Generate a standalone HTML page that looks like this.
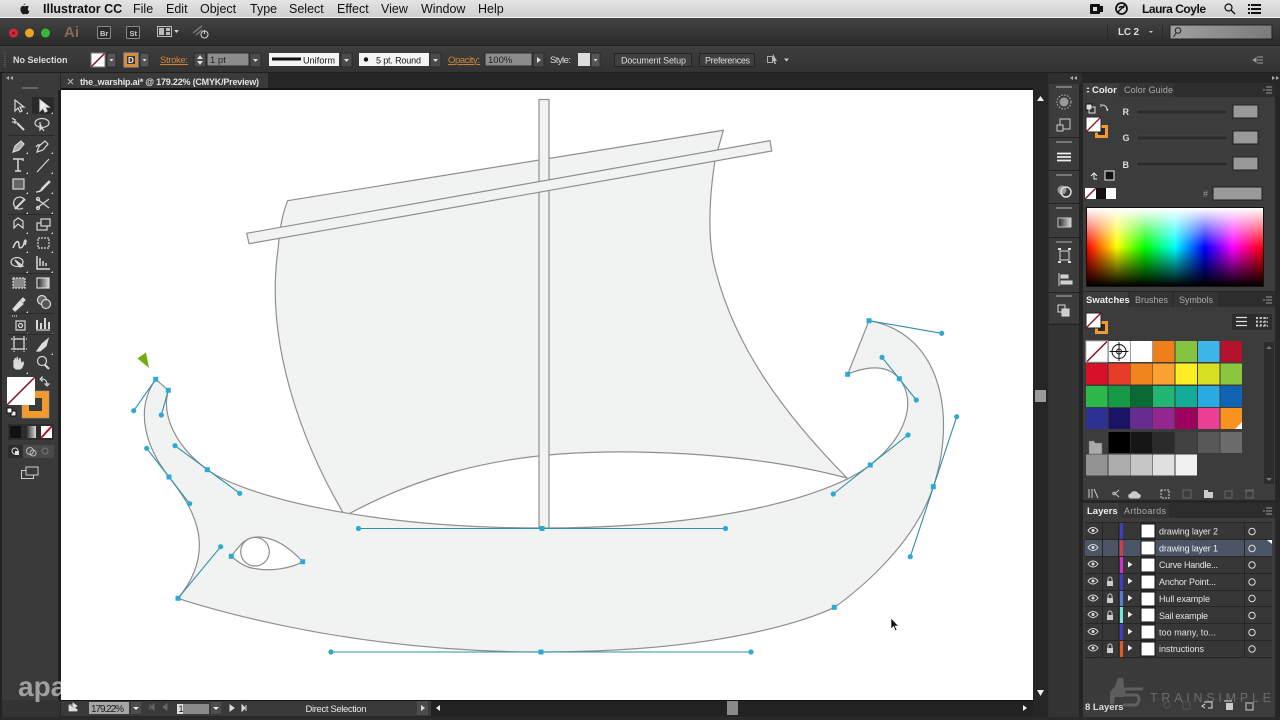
<!DOCTYPE html>
<html>
<head>
<meta charset="utf-8">
<style>
html,body{margin:0;padding:0;background:#262626;width:1280px;height:720px;overflow:hidden}
svg{display:block;position:absolute;left:0;top:0;filter:blur(.3px)}
text{font-family:"Liberation Sans",sans-serif;font-size:9.5px;fill:#dcdcdc}
.spec{position:absolute;left:1087px;top:208px;width:176px;height:78px;background:linear-gradient(to bottom,#fff 0%,rgba(255,255,255,0) 50%,rgba(0,0,0,0) 50%,#000 100%),linear-gradient(to right,#f00 0%,#ff0 17%,#0f0 33%,#0ff 50%,#00f 67%,#f0f 83%,#f00 100%)}
</style>
</head>
<body>
<svg width="1280" height="720" viewBox="0 0 1280 720" xmlns="http://www.w3.org/2000/svg">
<defs>
<linearGradient id="menu" x1="0" y1="0" x2="0" y2="1"><stop offset="0" stop-color="#e4e4e4"/><stop offset="1" stop-color="#cfcfcf"/></linearGradient>
<linearGradient id="app" x1="0" y1="0" x2="0" y2="1"><stop offset="0" stop-color="#434343"/><stop offset="1" stop-color="#2b2b2b"/></linearGradient>
<linearGradient id="ctl" x1="0" y1="0" x2="0" y2="1"><stop offset="0" stop-color="#3e3e3e"/><stop offset="1" stop-color="#333"/></linearGradient>
<linearGradient id="grad" x1="0" y1="0" x2="1" y2="0"><stop offset="0" stop-color="#222"/><stop offset="1" stop-color="#ddd"/></linearGradient>
<linearGradient id="srch" x1="0" y1="0" x2="1" y2="0"><stop offset="0" stop-color="#a0a0a0"/><stop offset="1" stop-color="#7a7a7a"/></linearGradient>
</defs>

<!-- Base chrome -->
<rect width="1280" height="720" fill="#262626"/>
<rect width="1280" height="17" fill="url(#menu)"/>
<rect y="17" width="1280" height="1" fill="#f4f4f4"/>
<rect y="18" width="1280" height="27" fill="url(#app)"/>
<rect y="45" width="1280" height="1" fill="#1f1f1f"/>
<rect y="46" width="1280" height="26" fill="url(#ctl)"/>
<rect y="72" width="1280" height="1" fill="#1f1f1f"/>
<rect x="61" y="73" width="207" height="17" fill="#3a3a3a"/>

<!-- Menu bar -->
<path d="M25.500,3.500c-.8.100-1.700.6-2 1.500.8 0 1.700-.6 2-1.500zM27.800,8.800c0-1.200 1-1.800 1.100-1.900-.6-.9-1.600-1-1.900-1-.8-.1-1.600.5-2 .5s-1.100-.5-1.800-.5c-1 0-1.800.5-2.300 1.400-1 1.700-.3 4.200.7 5.600.5.700 1 1.400 1.700 1.400s1-.4 1.800-.4 1.100.4 1.800.4 1.200-.7 1.700-1.400c.5-.8.7-1.500.7-1.600-.1 0-1.500-.6-1.500-2.500z" fill="#1a1a1a"/>
<text x="43" y="13" style="font-size:12.500px;font-weight:bold;fill:#111">Illustrator CC</text>
<text x="133" y="13" style="font-size:12.500px;fill:#111">File</text>
<text x="166" y="13" style="font-size:12.500px;fill:#111">Edit</text>
<text x="200" y="13" style="font-size:12.500px;fill:#111">Object</text>
<text x="250" y="13" style="font-size:12.500px;fill:#111">Type</text>
<text x="289" y="13" style="font-size:12.500px;fill:#111">Select</text>
<text x="337" y="13" style="font-size:12.500px;fill:#111">Effect</text>
<text x="381" y="13" style="font-size:12.500px;fill:#111">View</text>
<text x="421" y="13" style="font-size:12.500px;fill:#111">Window</text>
<text x="478" y="13" style="font-size:12.500px;fill:#111">Help</text>
<text x="1142" y="13" style="font-size:12px;fill:#111;font-weight:bold" textLength="64">Laura Coyle</text>
<rect x="1090" y="4" width="10" height="10" rx="1" fill="#111"/><rect x="1093" y="7" width="4" height="4" fill="#ddd"/><rect x="1100" y="6" width="3" height="6" fill="#111"/>
<circle cx="1121.500" cy="8.500" r="5.500" fill="none" stroke="#111" stroke-width="1.800"/><path d="M1118,12 L1125,5 M1119,8 A3 3 0 0 1 1124,8" stroke="#111" stroke-width="1.500" fill="none"/>
<circle cx="1228.500" cy="7.500" r="3.500" fill="none" stroke="#111" stroke-width="1.200"/><path d="M1231,10 L1235,14" stroke="#111" stroke-width="1.300"/>
<path d="M1248,4h2v2h-2zM1251,4h10v2h-10zM1248,8h2v2h-2zM1251,8h10v2h-10zM1248,12h2v2h-2zM1251,12h10v2h-10z" fill="#111"/>

<!-- App bar -->
<circle cx="13.500" cy="33" r="4.500" fill="#d8263f"/><circle cx="13.500" cy="33" r="1.500" fill="#7a1020"/>
<circle cx="29.500" cy="33" r="4.500" fill="#e9a51f"/>
<circle cx="45.500" cy="33" r="4.500" fill="#37b83a"/>
<text x="64" y="37" style="font-size:15px;font-weight:bold;fill:#8a6a55">Ai</text>
<rect x="97.500" y="26.500" width="13" height="12" rx="1" fill="#2b2b2b" stroke="#888"/><text x="100" y="36" style="font-size:7.500px;fill:#ccc;font-weight:bold">Br</text>
<rect x="126.500" y="26.500" width="13" height="12" rx="1" fill="#2b2b2b" stroke="#888"/><text x="129.500" y="36" style="font-size:7.500px;fill:#ccc;font-weight:bold">St</text>
<rect x="157.500" y="26.500" width="14" height="10" fill="none" stroke="#bbb"/><rect x="159" y="28" width="5" height="7" fill="#bbb"/><rect x="166" y="28" width="4" height="3" fill="#bbb"/><rect x="166" y="32" width="4" height="3" fill="#bbb"/><path d="M174,30h5l-2.500,3z" fill="#ccc"/>
<path d="M193,33 L202,26 M196,35 L202,30" stroke="#777" stroke-width="1.500"/><circle cx="204.500" cy="34.500" r="3.500" fill="none" stroke="#ccc" stroke-width="1.100"/><path d="M204.500,30v4" stroke="#ccc"/>
<rect x="1107" y="24" width="1" height="17" fill="#2a2a2a"/>
<text x="1118" y="35" style="font-size:10px;font-weight:bold;fill:#ddd" textLength="21">LC 2</text>
<path d="M1149,31h4l-2,2z" fill="#ccc"/>
<rect x="1162" y="24" width="1" height="17" fill="#2a2a2a"/>
<rect x="1170" y="25" width="102" height="14" fill="url(#srch)" stroke="#222"/>
<circle cx="1178" cy="30.500" r="2.800" fill="none" stroke="#222"/><path d="M1176,33 L1173.500,37" stroke="#222"/>

<!-- Control bar -->
<path d="M5,52v15" stroke="#555" stroke-dasharray="1 1" stroke-width="2"/>
<text x="13" y="63" style="font-size:9px;font-weight:bold;fill:#dcdcdc">No Selection</text>
<rect x="91" y="53" width="14" height="14" fill="#fff" stroke="#777"/><path d="M91.500,66.500 L104.500,53.500" stroke="#8a1020" stroke-width="1.500"/>
<rect x="107" y="53" width="9" height="14" fill="#555" stroke="#2a2a2a"/><path d="M109.500,59h4l-2,2.500z" fill="#ddd"/>
<rect x="124" y="53" width="14" height="14" fill="#e08a2a" stroke="#999"/><rect x="127" y="56" width="8" height="8" fill="#3a3a3a"/><text x="128" y="63" style="font-size:8px;font-weight:bold;fill:#eee">D</text>
<rect x="140" y="53" width="9" height="14" fill="#555" stroke="#2a2a2a"/><path d="M142.500,59h4l-2,2.500z" fill="#ddd"/>
<text x="160" y="63" style="font-size:9.500px;fill:#d68636;text-decoration:underline" textLength="28">Stroke:</text>
<rect x="194" y="53" width="12" height="14" fill="#4a4a4a" stroke="#2a2a2a"/><path d="M197,59l3-4 3,4zM197,61l3,4 3-4z" fill="#ddd"/>
<rect x="207" y="53" width="42" height="13" fill="#8d8d8d" stroke="#2a2a2a"/><text x="210" y="63" style="font-size:9.500px;fill:#222">1 pt</text>
<rect x="250" y="53" width="11" height="14" fill="#4a4a4a" stroke="#2a2a2a"/><path d="M253,59h5l-2.500,3z" fill="#ddd"/>
<rect x="269" y="53" width="70" height="13" fill="#f4f4f4"/><rect x="272" y="57.500" width="29" height="3" fill="#111"/><text x="303" y="63.500" style="font-size:9px;fill:#111" textLength="32">Uniform</text>
<rect x="341" y="53" width="11" height="14" fill="#4a4a4a" stroke="#2a2a2a"/><path d="M344,59h5l-2.500,3z" fill="#ddd"/>
<rect x="359" y="53" width="70" height="13" fill="#f4f4f4"/><circle cx="366" cy="59.500" r="2.200" fill="#111"/><text x="376" y="63.500" style="font-size:9px;fill:#111" textLength="45">5 pt. Round</text>
<rect x="430" y="53" width="11" height="14" fill="#4a4a4a" stroke="#2a2a2a"/><path d="M433,59h5l-2.500,3z" fill="#ddd"/>
<text x="448" y="63" style="font-size:9.500px;fill:#d68636;text-decoration:underline" textLength="32">Opacity:</text>
<rect x="485" y="53" width="47" height="13" fill="#8d8d8d" stroke="#2a2a2a"/><text x="488" y="63" style="font-size:9.500px;fill:#222">100%</text>
<rect x="533" y="53" width="11" height="14" fill="#4a4a4a" stroke="#2a2a2a"/><path d="M537,57v6l4-3z" fill="#ddd"/>
<text x="550" y="63" style="font-size:9.500px;fill:#ddd" textLength="21">Style:</text>
<rect x="578" y="53" width="12" height="13" fill="#ddd"/><rect x="591" y="53" width="9" height="14" fill="#555" stroke="#2a2a2a"/><path d="M593.500,59h4l-2,2.500z" fill="#ddd"/>
<rect x="614.500" y="53.500" width="77" height="13" fill="#3f3f3f" stroke="#242424"/><text x="621" y="63.500" style="font-size:9px;fill:#ddd" textLength="65">Document Setup</text>
<rect x="699.500" y="53.500" width="55" height="13" fill="#3f3f3f" stroke="#242424"/><text x="705" y="63.500" style="font-size:9px;fill:#ddd" textLength="45">Preferences</text>
<rect x="767.500" y="56.500" width="5" height="6" fill="none" stroke="#aaa"/><path d="M773,54l4,7-2,0 1,3-1.500,0-1-3-1.500,1z" fill="#bbb"/><path d="M784,58.500h5l-2.500,3z" fill="#ccc"/>
<path d="M1253,60l3-2v4z M1257,57h6M1257,60h6M1257,63h6" stroke="#999" fill="#999"/>

<!-- Tab -->
<path d="M68,79l5,5m0-5l-5,5" stroke="#bbb"/>
<text x="80" y="85" style="font-size:9px;font-weight:bold;fill:#e4e4e4" textLength="179">the_warship.ai* @ 179.22% (CMYK/Preview)</text>

<!-- Left toolbar -->
<rect x="2" y="73" width="58" height="627" fill="#3a3a3a"/>
<rect x="0" y="73" width="2" height="647" fill="#222"/>
<rect x="2" y="700" width="58" height="20" fill="#333"/>
<rect x="58" y="90" width="3" height="610" fill="#1e1e1e"/>
<path d="M6,78l3-2v4zM10,78l3-2v4z" fill="#aaa"/>
<rect x="22" y="87" width="16" height="2" fill="#666"/>
<rect x="32" y="97" width="22" height="17" fill="#2a2a2a"/>
<g fill="none" stroke="#d8d8d8" stroke-width="1.200">
<path d="M15,100v11l3-3 2,4 2-1-2-4h4z" fill="none"/>
<path d="M40,100v11l3-3 2,4 2-1-2-4h4z" fill="#eee"/>
<path d="M17,123l7,7" stroke-width="2"/><path d="M15,119v5M12,122h5M12,118l3,2" />
<ellipse cx="42" cy="123" rx="7" ry="4.500"/><path d="M40,122v8l2-2 2,3" fill="#ccc"/>
<path d="M13,152l2-6 6-5 3,3-5,6z" fill="#aaa"/>
<path d="M37,152l2-6 6-5 3,3-5,6z"/><path d="M36,147c2-3 5-3 3,0"/>
<path d="M13,159h10v2M18,159v12M15,171h6" stroke-width="1.500"/>
<path d="M37,172l12-13"/>
<rect x="13" y="179" width="11" height="10" fill="#666"/>
<path d="M36,192c3 0 5-1 6-4l7-7 1 1-7 7c-1 2-3 3-7 3z" fill="#ddd"/>
<path d="M24,199a6 6 0 1 0-1 9" /><path d="M15,209l10-10" stroke-width="2"/>
<path d="M37,199l12,9M37,208l12-9"/><circle cx="38" cy="199" r="1.500"/><circle cx="38" cy="208" r="1.500"/>
<path d="M14,228v-7l4-3 5,3v7l-5-4z"/>
<rect x="37" y="223" width="10" height="7"/><rect x="41" y="219" width="9" height="7" fill="#3a3a3a"/>
<path d="M13,248c3-8 6-8 6-3s4 3 5-2 3-3 1 2" stroke-width="1.500"/>
<rect x="38" y="238" width="11" height="10" stroke-dasharray="2 1"/>
<ellipse cx="17" cy="262" rx="6" ry="4.500"/><path d="M15,260l8,6-3,1z" fill="#ccc"/>
<path d="M37,256v13h13M40,258v8M43,261v5M46,263v3" stroke-width="1.500"/>
<rect x="13" y="278" width="12" height="10" fill="#888" stroke-dasharray="2 1"/>
<rect x="37" y="278" width="12" height="10" fill="url(#grad)"/>
<path d="M13,309l7-8 3,3-8,7zM21,300l2-2 2,2-2,2z" fill="#ddd"/>
<circle cx="42" cy="300" r="4.500" fill="#666"/><circle cx="46" cy="304" r="4.500" fill="#555"/>
<rect x="16" y="321" width="9" height="9"/><circle cx="20.500" cy="325.500" r="2"/><path d="M12,316h5" stroke-dasharray="1 1"/>
<path d="M37,329v-9M41,329v-6M45,329v-11M49,329v-7" stroke-width="2"/><path d="M36,330h14"/>
<rect x="14" y="339" width="10" height="10"/><path d="M11,339h16M11,349h16M14,336v16M24,336v16" stroke-dasharray="2 1"/>
<path d="M37,351l5-7 6-5-2,7-6,5z" fill="#ddd"/>
<path d="M14,367v-7l1 4v-6l2 5v-6l2 6 1-5 1 6 2-2c1 2-1 6-3 7h-4z" fill="#ddd"/>
<circle cx="42" cy="361" r="4.500"/><path d="M45,365l4,4" stroke-width="2"/>
</g>
<g fill="#ddd"><path d="M28,112l-2 2h2zM53,112l-2 2h2zM28,152l-2 2h2zM53,152l-2 2h2zM28,172l-2 2h2zM53,172l-2 2h2zM28,192l-2 2h2zM53,192l-2 2h2zM28,212l-2 2h2zM53,212l-2 2h2zM28,232l-2 2h2zM53,232l-2 2h2zM28,251l-2 2h2zM53,251l-2 2h2zM28,271l-2 2h2zM53,271l-2 2h2zM28,311l-2 2h2zM28,333l-2 2h2zM53,333l-2 2h2zM53,353l-2 2h2zM28,372l-2 2h2z"/></g>
<g fill="#2a2a2a"><rect x="8" y="135" width="46" height="1"/><rect x="8" y="214" width="46" height="1"/><rect x="8" y="273" width="46" height="1"/><rect x="8" y="313" width="46" height="1"/><rect x="8" y="334" width="46" height="1"/></g>

<!-- Fill / stroke -->
<rect x="22" y="391" width="27" height="27" fill="#f39a2e" stroke="#999" stroke-width=".5"/><rect x="29" y="398" width="13" height="13" fill="#3a3a3a"/>
<rect x="7" y="377" width="28" height="28" fill="#fff"/><path d="M7,405 L35,377" stroke="#8a1020" stroke-width="1.500"/>
<path d="M42,379c3 0 5 2 5 5M42,377v4l-2-2zM47,386l-2-2h4z" fill="none" stroke="#ddd"/>
<rect x="11" y="411" width="5" height="5" fill="#eee" stroke="#111"/><rect x="7" y="408" width="5" height="5" fill="#fff" stroke="#111"/>
<rect x="8" y="424" width="46" height="16" fill="#2c2c2c"/>
<rect x="10" y="426" width="11" height="12" fill="#111"/><rect x="26" y="426" width="10" height="12" fill="url(#grad)"/>
<rect x="41" y="426" width="11" height="12" fill="#fff"/><path d="M41,438L52,426" stroke="#b01020" stroke-width="2"/>
<rect x="8" y="445" width="46" height="13" fill="#4a4a4a"/><rect x="8" y="445" width="15" height="13" fill="#2c2c2c"/>
<circle cx="15" cy="451" r="3" fill="none" stroke="#ddd"/><rect x="15" y="451" width="4" height="4" fill="#ddd"/>
<circle cx="30" cy="451" r="3.500" fill="none" stroke="#bbb"/><circle cx="33" cy="453" r="3" fill="none" stroke="#bbb"/>
<circle cx="45" cy="451" r="3" fill="none" stroke="#777"/>
<rect x="21.500" y="470.500" width="12" height="8" fill="none" stroke="#ccc"/><rect x="26" y="467" width="12" height="8" fill="#3a3a3a" stroke="#ccc"/>

<!-- Watermark left (clipped by canvas) -->
<text x="18" y="696" style="font-size:28px;font-weight:bold;fill:#a0a0a0">apa</text>

<!-- Canvas -->
<rect x="61" y="90" width="972" height="610" fill="#fff"/>
<rect x="61" y="88" width="972" height="2" fill="#151515"/>

<!-- Artwork -->
<g fill="#f1f2f2" stroke="#8f8f8f" stroke-width="1.200" stroke-linejoin="miter">
<path d="M287.700,200.700 L723.300,130.300 L715,160 C708,205 708,245 716,272 C735,345 780,410 847,478 C760,455 650,448 560,454 C480,460 410,480 345,516 C300,440 265,340 278,250 C280,225 283,212 287.700,200.700Z"/>
<path d="M178,598.300 C178,598.300 331,652 541,652 C751,652 834.300,607.300 834.300,607.300 C834.300,607.300 910.300,556.700 933.300,486.700 C956.700,416.700 941.700,333.300 869,320.700 L847.700,374.300 C847.700,374.300 882,357.300 899.300,378.700 C916.300,400 908,435 870.300,465 C833,494 725,528 541.500,528 C358,528 239.700,493.300 207.300,469.700 C175,445.700 161.300,415 168.300,390.300 L155.700,379.300 C133.700,410.700 146.700,448.300 169,477 C189.700,503.700 220.700,546.700 178,598.300Z"/>
<rect x="539" y="99.500" width="10" height="428.500"/>
<path d="M246.700,233.300 L770,140.700 L771.700,151 L249,243.700Z"/>
<path d="M231.300,556.300 C240,545 245,537 258,537 C275,537 290,548 302.700,561.700 C290,569 270,571 258,569 C245,568 238,562 231.300,556.300Z" fill="#fff"/>
<circle cx="255" cy="551.700" r="14.300" fill="none"/>
</g>

<!-- Handles -->
<g stroke="#2d8fa8" stroke-width="1.100" fill="none">
<path d="M155.700,379.300L133.700,410.700M168.300,390.300L161.300,415M146.700,448.300L189.700,503.700M175,445.700L239.700,493.300M220.700,546.700L178,598.300"/>
<path d="M331,652H751M358,528.500H725.500"/>
<path d="M869,320.700L941.700,333.300M882,357.300L916.300,400M908,435L833.300,494M956.700,416.700L910.300,556.700"/>
</g>
<g fill="#2ea9d6">
<circle cx="133.700" cy="410.700" r="2.600"/><circle cx="161.300" cy="415" r="2.600"/><circle cx="146.700" cy="448.300" r="2.600"/><circle cx="189.700" cy="503.700" r="2.600"/><circle cx="175" cy="445.700" r="2.600"/><circle cx="239.700" cy="493.300" r="2.600"/><circle cx="220.700" cy="546.700" r="2.600"/>
<circle cx="331" cy="652" r="2.600"/><circle cx="751" cy="652" r="2.600"/><circle cx="358.500" cy="528.500" r="2.600"/><circle cx="725.500" cy="528.500" r="2.600"/>
<circle cx="941.700" cy="333.300" r="2.600"/><circle cx="882" cy="357.300" r="2.600"/><circle cx="916.300" cy="400" r="2.600"/><circle cx="908" cy="435" r="2.600"/><circle cx="833.300" cy="494" r="2.600"/><circle cx="956.700" cy="416.700" r="2.600"/><circle cx="910.300" cy="556.700" r="2.600"/>
<rect x="153.200" y="376.800" width="5" height="5"/><rect x="165.800" y="387.800" width="5" height="5"/><rect x="166.500" y="474.500" width="5" height="5"/><rect x="204.800" y="467.200" width="5" height="5"/><rect x="175.500" y="595.800" width="5" height="5"/><rect x="228.800" y="553.800" width="5" height="5"/><rect x="300.200" y="559.200" width="5" height="5"/>
<rect x="538.500" y="649.500" width="5" height="5"/><rect x="539.500" y="526" width="5" height="5"/>
<rect x="866.500" y="318.200" width="5" height="5"/><rect x="845.200" y="371.800" width="5" height="5"/><rect x="896.800" y="376.200" width="5" height="5"/><rect x="867.800" y="462.500" width="5" height="5"/><rect x="930.800" y="484.200" width="5" height="5"/><rect x="831.800" y="604.800" width="5" height="5"/>
</g>

<!-- Green arrow -->
<path d="M137.500,358.500 L146,352.500 L149,368Z" fill="#6fae0e"/>
<!-- Cursor -->
<path d="M891,618 L891,629 L893.500,626.500 L895.500,631 L897,630 L895,626 L898.500,626Z" fill="#111" stroke="#fff" stroke-width=".6"/>

<!-- Canvas scroll right -->
<rect x="1033" y="90" width="15" height="610" fill="#262626"/>
<rect x="1035" y="390" width="11" height="12" fill="#9a9a9a"/>
<path d="M1037,101l3.500-5 3.500,5z M1037,690l3.500,6 3.500-6z" fill="#eee"/>

<!-- Bottom status -->
<rect x="61" y="700" width="972" height="16" fill="#3a3a3a"/>
<rect x="61" y="700" width="972" height="1" fill="#111"/>
<rect x="431" y="701" width="602" height="15" fill="#222"/>
<rect x="727" y="701" width="11" height="14" fill="#8a8a8a"/>
<path d="M69,705h4M73,703l4,3-4,3zM69,705v6h8v-2" fill="#ddd" stroke="#ddd" stroke-width=".8"/>
<rect x="89" y="702" width="40" height="12" fill="#a6a6a6"/><text x="91" y="712" style="font-size:10px;fill:#222" textLength="33">179.22%</text>
<rect x="131" y="702" width="10" height="12" fill="#4c4c4c"/><path d="M133,707h6l-3,3z" fill="#eee"/>
<path d="M150,704v6M154,704v6l-3-3zM167,704v6l-4-3z" stroke="#666" fill="#666"/>
<rect x="177" y="704" width="32" height="10" fill="#8a8a8a"/><rect x="177" y="704" width="6" height="10" fill="#ddd"/><text x="178.500" y="712" style="font-size:9px;fill:#111">1</text>
<rect x="211" y="702" width="10" height="12" fill="#4c4c4c"/><path d="M213,707h6l-3,3z" fill="#eee"/>
<path d="M230,705v6l4-3zM242,705v6l3-3zM246,705v6" fill="#ddd" stroke="#ddd"/>
<text x="305.500" y="712" style="font-size:9.500px;fill:#e8e8e8" textLength="61">Direct Selection</text>
<rect x="417" y="701" width="11" height="14" fill="#4c4c4c"/><path d="M421,705v6l4-3z" fill="#ddd"/>
<path d="M440,705v6l-4-3z" fill="#eee"/>
<path d="M1023,705v6l4-3z" fill="#eee"/>

<!-- Dock column -->
<rect x="1048" y="73" width="34" height="647" fill="#2f2f2f"/>
<rect x="1049" y="88" width="30" height="632" fill="#333"/>
<rect x="1049" y="84" width="30" height="239" fill="#3c3c3c"/>
<g fill="#242424"><rect x="1049" y="137" width="30" height="1"/><rect x="1049" y="170" width="30" height="1"/><rect x="1049" y="203" width="30" height="1"/><rect x="1049" y="237" width="30" height="1"/><rect x="1049" y="292" width="30" height="1"/><rect x="1049" y="324" width="30" height="1"/><rect x="1079" y="84" width="4" height="636"/></g>
<g fill="#777"><rect x="1056" y="86" width="16" height="2"/><rect x="1056" y="141" width="16" height="2"/><rect x="1056" y="174" width="16" height="2"/><rect x="1056" y="207" width="16" height="2"/><rect x="1056" y="241" width="16" height="2"/><rect x="1056" y="295" width="16" height="2"/></g>
<path d="M1070,78l3-2v4zM1074,78l3-2v4zM1272,76l3,2-3,2zM1276,76l3,2-3,2z" fill="#aaa"/>
<circle cx="1064" cy="102" r="7" fill="none" stroke="#bbb" stroke-dasharray="1.500 1.500"/><circle cx="1064" cy="102" r="4.500" fill="#999"/>
<rect x="1060" y="119" width="10" height="10" fill="none" stroke="#ccc"/><rect x="1057" y="125" width="6" height="6" fill="#3c3c3c" stroke="#ccc"/>
<path d="M1057,153.500h14M1057,157h14M1057,160.500h14" stroke="#eee" stroke-width="1.800"/>
<circle cx="1062" cy="190" r="4.500" fill="#999"/><circle cx="1066" cy="192" r="5" fill="none" stroke="#ddd" stroke-width="1.500"/>
<rect x="1058" y="218" width="13" height="9" fill="url(#grad)" stroke="#ccc"/>
<rect x="1060" y="251" width="9" height="9" fill="none" stroke="#ddd"/><path d="M1058,249h3M1068,249h3M1058,262h3M1068,262h3" stroke="#ddd" stroke-width="2"/>
<path d="M1059,273v13M1061,275h7v3h-7zM1061,281h11v3h-11z" stroke="#ddd" fill="#ccc"/>
<rect x="1058" y="305" width="7" height="7" fill="none" stroke="#ddd"/><rect x="1062" y="309" width="7" height="7" fill="#ccc" stroke="#ddd"/>

<!-- Panels -->
<rect x="1083" y="84" width="197" height="636" fill="#262626"/>
<rect x="1083" y="83" width="192" height="208" fill="#3c3c3c"/>
<rect x="1083" y="83" width="192" height="14" fill="#2d2d2d"/>
<rect x="1083" y="83" width="36" height="15" fill="#3c3c3c"/>
<rect x="1119" y="83" width="55" height="14" fill="#343434"/>
<path d="M1086.500,89l1.500-2 1.500,2zM1086.500,91l1.500,2 1.500-2z" fill="#ddd"/>
<text x="1092" y="93" style="font-size:9.500px;font-weight:bold;fill:#eee">Color</text>
<text x="1124" y="93" style="font-size:9px;fill:#aaa" textLength="49">Color Guide</text>
<path d="M1263,90h2M1266,87h6M1266,90h6M1266,93h6" stroke="#999"/>

<rect x="1086" y="104" width="6" height="6" fill="#ddd" stroke="#111"/><rect x="1089" y="107" width="6" height="6" fill="none" stroke="#ddd"/>
<path d="M1102,105c3 0 5 2 5 5M1101,104v3M1108,109l-1,2" stroke="#ddd" fill="none"/>
<rect x="1095" y="125" width="13" height="13" fill="#f39a2e"/><rect x="1098" y="128" width="7" height="7" fill="#2a2a2a"/>
<rect x="1086" y="117" width="15" height="15" fill="#fff" stroke="#222"/><path d="M1086,132L1101,117" stroke="#8a1020" stroke-width="1.300"/>
<text x="1122.500" y="115" style="font-size:9px;font-weight:bold;fill:#ddd">R</text>
<text x="1122.500" y="141" style="font-size:9px;font-weight:bold;fill:#ddd">G</text>
<text x="1122.500" y="168" style="font-size:9px;font-weight:bold;fill:#ddd">B</text>
<rect x="1137" y="110" width="90" height="4" fill="#2c2c2c" stroke="#4a4a4a" stroke-width=".5"/>
<rect x="1137" y="136" width="90" height="4" fill="#2c2c2c" stroke="#4a4a4a" stroke-width=".5"/>
<rect x="1137" y="162" width="90" height="4" fill="#2c2c2c" stroke="#4a4a4a" stroke-width=".5"/>
<rect x="1233" y="105" width="25" height="13" fill="#999" stroke="#1f1f1f"/>
<rect x="1233" y="131" width="25" height="13" fill="#999" stroke="#1f1f1f"/>
<rect x="1233" y="157" width="25" height="13" fill="#999" stroke="#1f1f1f"/>
<path d="M1091,176l3-3 3,3M1094,173v6h3" stroke="#eee" fill="none"/>
<rect x="1105" y="171" width="9" height="9" fill="#111" stroke="#eee"/>
<rect x="1085" y="188" width="11" height="11" fill="#fff"/><path d="M1085,199L1096,188" stroke="#8a1020" stroke-width="1.300"/>
<rect x="1096" y="188" width="10" height="11" fill="#111"/><rect x="1106" y="188" width="10" height="11" fill="#fff"/>
<text x="1203" y="197" style="font-size:9px;fill:#999">#</text>
<rect x="1213" y="187" width="49" height="13" fill="#999" stroke="#1f1f1f"/>
<rect x="1086" y="207" width="178" height="80" fill="#111"/>

<!-- Swatches panel -->
<rect x="1083" y="292" width="192" height="208" fill="#3c3c3c"/>
<rect x="1083" y="292" width="192" height="15" fill="#2d2d2d"/>
<rect x="1083" y="292" width="45" height="16" fill="#3c3c3c"/>
<rect x="1129" y="292" width="43" height="15" fill="#343434"/><rect x="1174" y="292" width="44" height="15" fill="#343434"/>
<text x="1086" y="303" style="font-size:9.500px;font-weight:bold;fill:#eee">Swatches</text>
<text x="1135" y="303" style="font-size:9px;fill:#aaa" textLength="33">Brushes</text>
<text x="1179" y="303" style="font-size:9px;fill:#aaa" textLength="34">Symbols</text>
<path d="M1263,300h2M1266,297h6M1266,300h6M1266,303h6" stroke="#999"/>
<rect x="1095" y="321" width="13" height="13" fill="#f39a2e"/><rect x="1098" y="324" width="7" height="7" fill="#2a2a2a"/>
<rect x="1086" y="313" width="15" height="15" fill="#fff" stroke="#222"/><path d="M1086,328L1101,313" stroke="#8a1020" stroke-width="1.300"/>
<rect x="1232" y="314" width="20" height="16" fill="#2c2c2c"/><rect x="1252" y="314" width="20" height="16" fill="#2c2c2c"/>
<path d="M1236,317.500h11M1236,321.500h11M1236,325.500h11" stroke="#ddd" stroke-width="1.300"/>
<path d="M1256,318h12M1256,322h12M1256,326h12M1257,317v10M1261,317v10M1265,317v10" stroke="#ddd" stroke-width="1.300" stroke-dasharray="2 1.500"/>

<g>
<rect x="1086" y="341" width="21.500" height="21" fill="#fff" stroke="#bbb"/><path d="M1087,361.500L1107,341.500" stroke="#8a1020" stroke-width="1.500"/>
<rect x="1108.500" y="341" width="21.500" height="21" fill="#fff"/><circle cx="1119" cy="351.500" r="7" fill="none" stroke="#111"/><circle cx="1119" cy="351.500" r="2.500" fill="none" stroke="#111"/><path d="M1119,342v19M1109.500,351.500h19" stroke="#111"/>
<rect x="1130.500" y="341" width="22" height="21" fill="#fff"/>
<rect x="1153" y="341" width="21.500" height="21" fill="#ef7f1a"/>
<rect x="1175.500" y="341" width="21.500" height="21" fill="#84c441"/>
<rect x="1198" y="341" width="21.500" height="21" fill="#3fb6ea"/>
<rect x="1220.500" y="341" width="21.500" height="21" fill="#b5122b"/>

<rect x="1086" y="363.500" width="21.500" height="21" fill="#d8102a"/>
<rect x="1108.500" y="363.500" width="21.500" height="21" fill="#e63c28"/>
<rect x="1130.500" y="363.500" width="22" height="21" fill="#f0851e"/>
<rect x="1153" y="363.500" width="21.500" height="21" fill="#f9a22f"/>
<rect x="1175.500" y="363.500" width="21.500" height="21" fill="#fbee23"/>
<rect x="1198" y="363.500" width="21.500" height="21" fill="#d7df23"/>
<rect x="1220.500" y="363.500" width="21.500" height="21" fill="#8cc63f"/>

<rect x="1086" y="386" width="21.500" height="21" fill="#2db84b"/>
<rect x="1108.500" y="386" width="21.500" height="21" fill="#169a48"/>
<rect x="1130.500" y="386" width="22" height="21" fill="#0a6a36"/>
<rect x="1153" y="386" width="21.500" height="21" fill="#22b573"/>
<rect x="1175.500" y="386" width="21.500" height="21" fill="#14ab99"/>
<rect x="1198" y="386" width="21.500" height="21" fill="#29abe2"/>
<rect x="1220.500" y="386" width="21.500" height="21" fill="#1164b4"/>

<rect x="1086" y="408" width="21.500" height="21" fill="#2e3192"/>
<rect x="1108.500" y="408" width="21.500" height="21" fill="#1b1464"/>
<rect x="1130.500" y="408" width="22" height="21" fill="#662d91"/>
<rect x="1153" y="408" width="21.500" height="21" fill="#93278f"/>
<rect x="1175.500" y="408" width="21.500" height="21" fill="#9e005d"/>
<rect x="1198" y="408" width="21.500" height="21" fill="#ed3e96"/>
<rect x="1220.500" y="408" width="21.500" height="21" fill="#f7931e"/><path d="M1235,429l7-7v7z" fill="#fff"/>

<path d="M1089,441h5l1,2h7v11h-13z" fill="#aaa" stroke="#666" stroke-width=".5"/>
<rect x="1108.500" y="432" width="21.500" height="21" fill="#000"/>
<rect x="1130.500" y="432" width="22" height="21" fill="#161616"/>
<rect x="1153" y="432" width="21.500" height="21" fill="#2b2b2b"/>
<rect x="1175.500" y="432" width="21.500" height="21" fill="#424242"/>
<rect x="1198" y="432" width="21.500" height="21" fill="#585858"/>
<rect x="1220.500" y="432" width="21.500" height="21" fill="#6c6c6c"/>

<rect x="1086" y="454.500" width="21.500" height="21" fill="#939393"/>
<rect x="1108.500" y="454.500" width="21.500" height="21" fill="#adadad"/>
<rect x="1130.500" y="454.500" width="22" height="21" fill="#c6c6c6"/>
<rect x="1153" y="454.500" width="21.500" height="21" fill="#e0e0e0"/>
<rect x="1175.500" y="454.500" width="21.500" height="21" fill="#f1f1f1"/>
</g>
<rect x="1264" y="342" width="10" height="142" fill="#2c2c2c"/>
<path d="M1266,349l3-3 3,3zM1266,478l3,3 3-3z" fill="#777"/>
<g stroke="#ccc" fill="none">
<path d="M1089,489v9M1092,489v9M1094,489l4,9"/>
<path d="M1119,490l-4,3.500 4,3.500"/><circle cx="1114" cy="493.500" r="1.200"/>
<path d="M1131,498c-3 0-3-4 0-4 1-3 6-3 7 0 3 0 3 4 0 4z" fill="#ccc"/>
<rect x="1161" y="490" width="8" height="8" stroke-dasharray="2 1"/>
</g>
<rect x="1204" y="492" width="9" height="6" fill="#ccc"/><rect x="1204" y="490" width="4" height="2" fill="#ccc"/>
<g stroke="#666" fill="none"><rect x="1183" y="490" width="8" height="8"/><rect x="1225" y="491" width="7" height="7"/><rect x="1246" y="491" width="7" height="7"/><path d="M1245,490h9"/></g>

<!-- Layers panel -->
<rect x="1083" y="503" width="192" height="215" fill="#3c3c3c"/>
<rect x="1083" y="503" width="192" height="15" fill="#2d2d2d"/>
<rect x="1083" y="503" width="36" height="16" fill="#3c3c3c"/>
<rect x="1119" y="503" width="50" height="15" fill="#343434"/>
<text x="1087" y="514" style="font-size:9.500px;font-weight:bold;fill:#eee">Layers</text>
<text x="1124" y="514" style="font-size:9px;fill:#aaa" textLength="42">Artboards</text>
<path d="M1263,511h2M1266,508h6M1266,511h6M1266,514h6" stroke="#999"/>
<rect x="1085" y="522" width="187" height="137" fill="#2f2f2f" opacity=".3"/>
<rect x="1085" y="659" width="187" height="38" fill="#3a3a3a"/>
<rect x="1085" y="539.500" width="187" height="17" fill="#4b5566"/>
<g fill="#262626">
<rect x="1085" y="522" width="187" height="1"/><rect x="1085" y="539" width="187" height="1"/><rect x="1085" y="556" width="187" height="1"/><rect x="1085" y="573" width="187" height="1"/><rect x="1085" y="590" width="187" height="1"/><rect x="1085" y="606" width="187" height="1"/><rect x="1085" y="623" width="187" height="1"/><rect x="1085" y="640" width="187" height="1"/><rect x="1085" y="657" width="187" height="1"/>
<rect x="1102" y="522" width="1" height="136"/><rect x="1118" y="522" width="1" height="136"/><rect x="1244" y="522" width="1" height="136"/>
</g>
<g fill="none" stroke="#ddd" stroke-width="1">
<path d="M1088,530.500c3-4 7-4 10,0c-3,4-7,4-10,0z"/><path d="M1088,547.500c3-4 7-4 10,0c-3,4-7,4-10,0z"/><path d="M1088,564c3-4 7-4 10,0c-3,4-7,4-10,0z"/><path d="M1088,581c3-4 7-4 10,0c-3,4-7,4-10,0z"/><path d="M1088,598c3-4 7-4 10,0c-3,4-7,4-10,0z"/><path d="M1088,614.500c3-4 7-4 10,0c-3,4-7,4-10,0z"/><path d="M1088,631.500c3-4 7-4 10,0c-3,4-7,4-10,0z"/><path d="M1088,648c3-4 7-4 10,0c-3,4-7,4-10,0z"/>
</g>
<g fill="#ddd"><circle cx="1093" cy="530.500" r="1.500"/><circle cx="1093" cy="547.500" r="1.500"/><circle cx="1093" cy="564" r="1.500"/><circle cx="1093" cy="581" r="1.500"/><circle cx="1093" cy="598" r="1.500"/><circle cx="1093" cy="614.500" r="1.500"/><circle cx="1093" cy="631.500" r="1.500"/><circle cx="1093" cy="648" r="1.500"/></g>
<g fill="#ccc"><rect x="1107" y="581" width="6" height="5"/><rect x="1107" y="598" width="6" height="5"/><rect x="1107" y="615" width="6" height="5"/><rect x="1107" y="648" width="6" height="5"/></g>
<g fill="none" stroke="#ccc"><path d="M1108,581v-2a2 2 0 0 1 4 0v2M1108,598v-2a2 2 0 0 1 4 0v2M1108,615v-2a2 2 0 0 1 4 0v2M1108,648v-2a2 2 0 0 1 4 0v2"/></g>
<rect x="1120" y="523" width="3" height="16" fill="#3d3dc8"/>
<rect x="1120" y="540" width="3" height="16" fill="#d83a48"/>
<rect x="1120" y="557" width="3" height="16" fill="#d42ecf"/>
<rect x="1120" y="574" width="3" height="16" fill="#3d3dc8"/>
<rect x="1120" y="591" width="3" height="15" fill="#4f7fdc"/>
<rect x="1120" y="607" width="3" height="16" fill="#6fe8e0"/>
<rect x="1120" y="624" width="3" height="16" fill="#3d3dc8"/>
<rect x="1120" y="641" width="3" height="16" fill="#e35a25"/>
<path d="M1128,561.500v6l4.500-3zM1128,578v6l4.500-3zM1128,595v6l4.500-3zM1128,611.500v6l4.500-3zM1128,628.500v6l4.500-3zM1128,645v6l4.500-3z" fill="#eee"/>
<g fill="#fff" stroke="#111"><rect x="1141" y="524" width="14" height="14"/><rect x="1141" y="541" width="14" height="14"/><rect x="1141" y="558" width="14" height="14"/><rect x="1141" y="575" width="14" height="14"/><rect x="1141" y="592" width="14" height="14"/><rect x="1141" y="608" width="14" height="14"/><rect x="1141" y="625" width="14" height="14"/><rect x="1141" y="642" width="14" height="14"/></g>
<text x="1159" y="534.500" style="font-size:9px;fill:#e4e4e4" textLength="59">drawing layer 2</text>
<text x="1159" y="551.500" style="font-size:9px;fill:#f0f0f0" textLength="59">drawing layer 1</text>
<text x="1159" y="568" style="font-size:9px;fill:#e4e4e4" textLength="59">Curve Handle...</text>
<text x="1159" y="585" style="font-size:9px;fill:#e4e4e4" textLength="57">Anchor Point...</text>
<text x="1159" y="602" style="font-size:9px;fill:#e4e4e4" textLength="51">Hull example</text>
<text x="1159" y="619" style="font-size:9px;fill:#e4e4e4" textLength="49">Sail example</text>
<text x="1159" y="635.500" style="font-size:9px;fill:#e4e4e4" textLength="57">too many, to...</text>
<text x="1159" y="652" style="font-size:9px;fill:#e4e4e4" textLength="45">instructions</text>
<g fill="none" stroke="#ddd"><circle cx="1252" cy="531.500" r="3.200"/><circle cx="1252" cy="548.500" r="3.200"/><circle cx="1252" cy="565" r="3.200"/><circle cx="1252" cy="582" r="3.200"/><circle cx="1252" cy="598.500" r="3.200"/><circle cx="1252" cy="615.500" r="3.200"/><circle cx="1252" cy="632.500" r="3.200"/><circle cx="1252" cy="649" r="3.200"/></g>
<path d="M1267,540h5v4z" fill="#fff"/>

<!-- TrainSimple watermark -->
<path d="M1110,692l5-6 3-8h5l1,8v11h-9l-1,7h-4z" fill="#666" opacity=".8"/>
<path d="M1143,689h-17c-3,0-3,6,0,6h10c4,0 4,9-1,10h-12" fill="none" stroke="#5f5f5f" stroke-width="3"/>
<text x="1150" y="702" style="font-size:12.500px;fill:#747474;opacity:.85" textLength="121">TRAINSIMPLE</text>
<text x="1085" y="710" style="font-size:9.500px;font-weight:bold;fill:#ddd">8 Layers</text>
<circle cx="1167" cy="705" r="3" fill="none" stroke="#555"/><rect x="1183" y="702" width="7" height="7" fill="none" stroke="#555"/>
<path d="M1204,702h8v6h-4M1205,704l-3,2 3,2" stroke="#ddd" fill="none"/>
<rect x="1226" y="703" width="7" height="7" fill="#ccc"/><path d="M1224,701h8" stroke="#ddd"/>
<path d="M1245,703h9M1246,704v6h7v-6" stroke="#ccc" fill="none"/>
<rect x="0" y="717" width="1280" height="3" fill="#2a2a2a"/>
</svg>
<div class="spec"></div>
</body>
</html>
